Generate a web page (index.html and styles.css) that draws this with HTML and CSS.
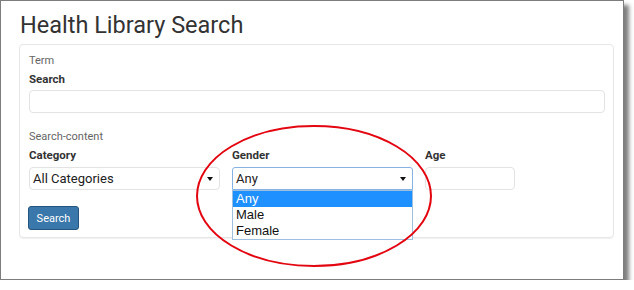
FILE: index.html
```html
<!DOCTYPE html>
<html lang="en">
<head>
    <meta charset="UTF-8">
    <title>Health Library Search</title>
    <link rel="stylesheet" href="styles.css">
</head>
<body>
    <div class="frame">
        <h1 class="title">Health Library Search</h1>

        <!-- Search panel -->
        <div class="panel">
            <div class="section">Term</div>
            <label class="label">Search</label>
            <div class="text-input wide"></div>

            <div class="section section-gap">Search-content</div>
            <div class="fields">
                <div class="field">
                    <label class="label">Category</label>
                    <div class="select">
                        <span>All Categories</span>
                        <svg class="caret" width="6" height="4" viewBox="0 0 6 4"><path d="M0 0h6L3 4z" fill="#111"/></svg>
                    </div>
                </div>
                <div class="field">
                    <label class="label">Gender</label>
                    <div class="select open">
                        <span>Any</span>
                        <svg class="caret" width="6" height="4" viewBox="0 0 6 4"><path d="M0 0h6L3 4z" fill="#111"/></svg>
                        <ul class="options">
                            <li class="active">Any</li>
                            <li>Male</li>
                            <li>Female</li>
                        </ul>
                    </div>
                </div>
                <div class="field">
                    <label class="label">Age</label>
                    <div class="text-input"></div>
                </div>
            </div>

            <button class="btn">Search</button>
        </div>

        <!-- Annotation -->
        <svg class="circle" width="250" height="150" viewBox="0 0 250 150">
            <ellipse cx="125" cy="75" rx="117" ry="70" fill="none" stroke="#e3050f" stroke-width="2"/>
        </svg>
    </div>
</body>
</html>
```

FILE: styles.css
```css
/* General */
body {
    margin: 0;
    background-color: #fff;
    font-family: Roboto, "Liberation Sans", Arial, sans-serif;
    color: #333;
}

.frame {
    position: relative;
    width: 604px;
    height: 267px;
    padding: 11px 0 0 18px;
    border: 1px solid #7d7d7d;
    background-color: #fff;
    box-shadow: 5px 5px 4px rgba(0, 0, 0, 0.5);
}

.title {
    margin: 0 0 5px 1px;
    font-size: 23.5px;
    line-height: 27px;
    font-weight: 400;
    color: #333;
}

/* Panel */
.panel {
    width: 576px;
    padding: 8px 8px 7px 9px;
    border: 1px solid #e6e6e6;
    border-radius: 4px;
    box-shadow: 0 1px 1px rgba(0, 0, 0, 0.06);
}

.section {
    font-size: 11px;
    line-height: 16px;
    color: #666;
}

.section-gap {
    margin-top: 16px;
}

.label {
    display: block;
    margin-top: 2px;
    font-size: 11.5px;
    line-height: 16px;
    font-weight: 700;
    color: #333;
}

.text-input {
    box-sizing: border-box;
    height: 23px;
    margin-top: 3px;
    border: 1px solid #e3e3e3;
    border-radius: 4px;
}

.fields {
    display: grid;
    grid-template-columns: 191px 181px 90px;
    column-gap: 12px;
}

.fields .text-input {
    margin-top: 4px;
}

/* Selects */
.select {
    position: relative;
    box-sizing: border-box;
    height: 23px;
    margin-top: 4px;
    padding: 0 6px 0 3px;
    display: flex;
    align-items: center;
    justify-content: space-between;
    border: 1px solid #e3e3e3;
    border-radius: 4px;
    font-size: 13px;
    color: #222;
}

.select.open {
    border-color: #86b3e4;
    border-radius: 3px 3px 0 0;
}

.options {
    position: absolute;
    top: 22px;
    left: -1px;
    right: -1px;
    margin: 0;
    padding: 0;
    list-style: none;
    border: 1px solid #9fbfe0;
    background-color: #fff;
    font-family: "Liberation Sans", Arial, sans-serif;
    font-size: 13px;
    color: #111;
}

.options li {
    height: 16px;
    line-height: 16px;
    padding-left: 3px;
}

.options li.active {
    background-color: #1e90ff;
    color: #fff;
}

/* Button */
.btn {
    display: block;
    width: 51px;
    height: 24px;
    margin: 16px 0 0 -1px;
    padding: 0;
    border: 1px solid #25557f;
    border-radius: 3px;
    background-color: #3a77aa;
    color: #fff;
    font-family: Roboto, Arial, sans-serif;
    font-size: 11px;
}

.circle {
    position: absolute;
    left: 188px;
    top: 120px;
}
```
